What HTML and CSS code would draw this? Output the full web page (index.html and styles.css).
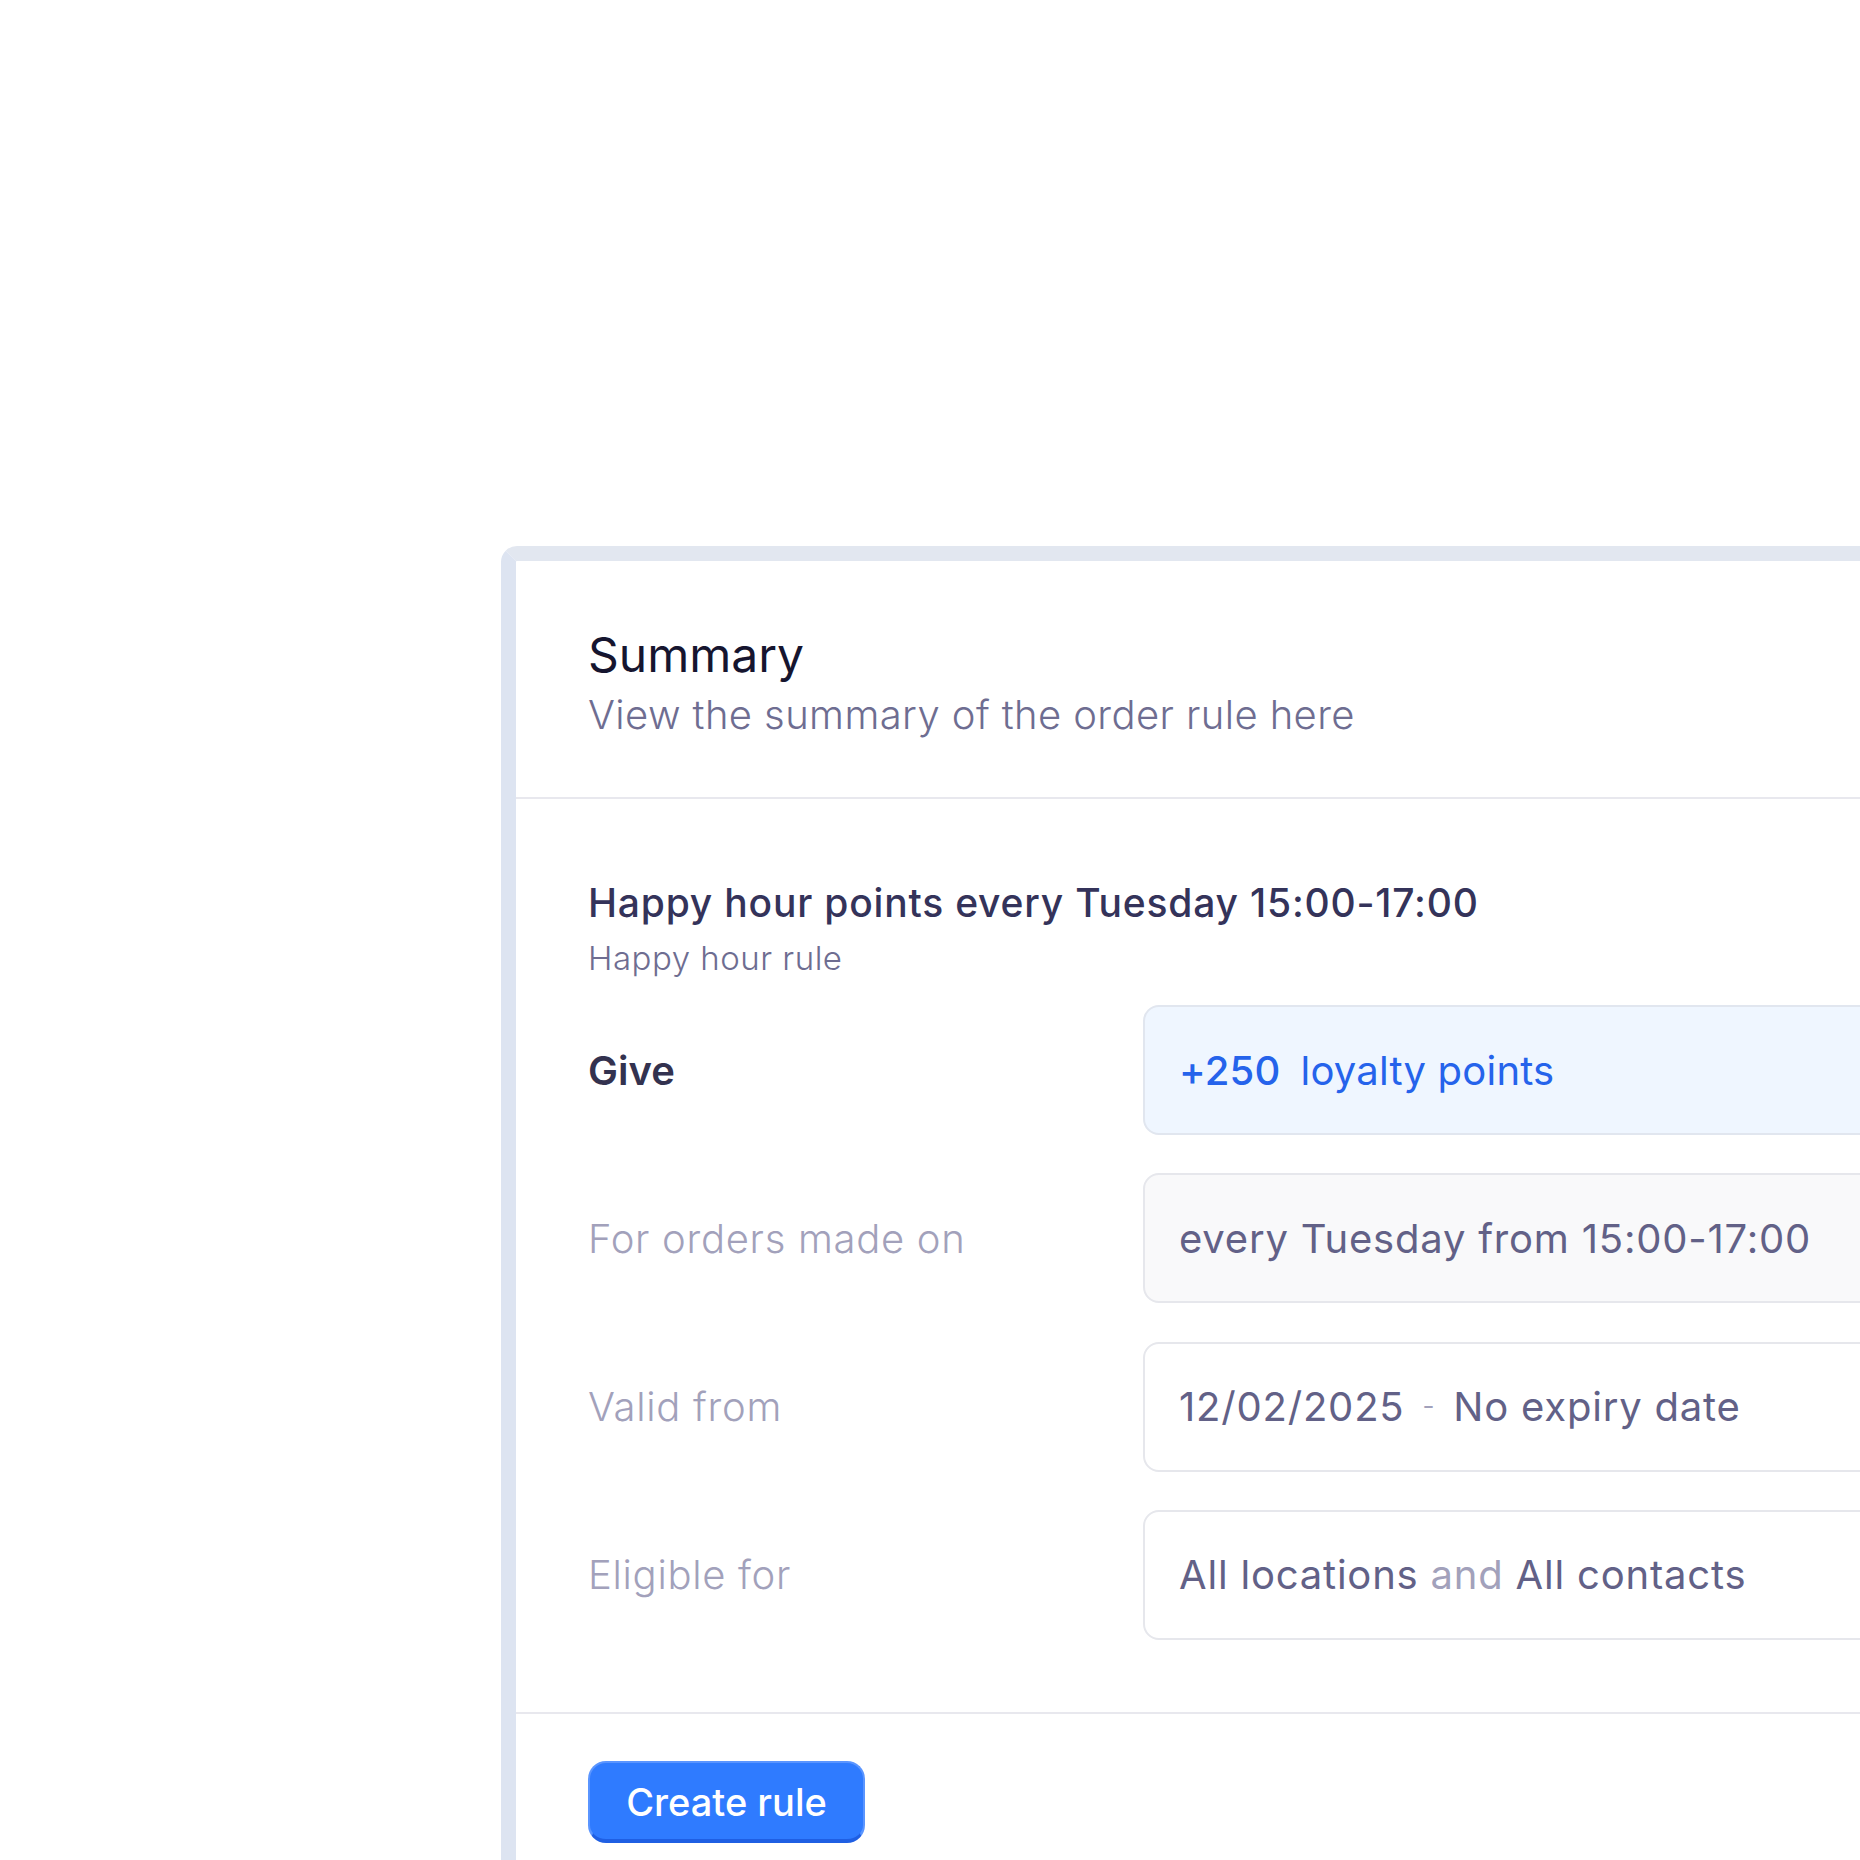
FILE: index.html
```html
<!DOCTYPE html>
<html lang="en">
<head>
  <meta charset="utf-8">
  <meta name="viewport" content="width=device-width, initial-scale=1">
  <title>Order rule - Summary</title>
  <link rel="stylesheet" href="styles.css">
</head>
<body>
  <div class="summary-card">
    <div class="card-head">
      <h1 class="card-title">Summary</h1>
      <p class="card-subtitle">View the summary of the order rule here</p>
    </div>

    <div class="card-body">
      <h2 class="rule-title">Happy hour points every Tuesday 15:00-17:00</h2>
      <p class="rule-type">Happy hour rule</p>

      <div class="rule-rows">
        <div class="rule-label strong">Give</div>
        <div class="rule-value highlight">
          <span class="points">+250</span>
          <span>loyalty points</span>
        </div>

        <div class="rule-label">For orders made on</div>
        <div class="rule-value muted">
          <span>every Tuesday from 15:00-17:00</span>
        </div>

        <div class="rule-label">Valid from</div>
        <div class="rule-value">
          <span>12/02/2025 <span class="dash">-</span> No expiry date</span>
        </div>

        <div class="rule-label">Eligible for</div>
        <div class="rule-value">
          <span>All locations <span class="soft">and</span> All contacts</span>
        </div>
      </div>
    </div>

    <div class="card-foot">
      <button class="create-button">Create rule</button>
    </div>
  </div>
</body>
</html>
```

FILE: styles.css
```css
* {
  margin: 0;
  padding: 0;
  box-sizing: border-box;
}

html, body {
  overflow: hidden;
}

body {
  font-family: 'Inter', 'Liberation Sans', sans-serif;
  background: #ffffff;
  min-height: 100vh;
  color: #2f2e4f;
}

.summary-card {
  margin: 546px 0 0 501px;
  width: 1500px;
  background: #ffffff;
  border: 15px solid #e2e7f0;
  border-left-color: #dde4f1;
  border-radius: 16px 0 0 0;
}

.card-head {
  padding: 65px 72px 58px;
}

.card-title {
  font-size: 48px;
  line-height: 58px;
  font-weight: 400;
  color: #16152f;
}

.card-subtitle {
  margin-top: 7px;
  font-size: 40px;
  line-height: 48px;
  font-weight: 300;
  letter-spacing: 0.4px;
  color: #6e6d91;
}

.card-body {
  border-top: 2px solid #e8e8ee;
  padding: 81px 72px 72px;
}

.rule-title {
  font-size: 39px;
  line-height: 46px;
  font-weight: 500;
  letter-spacing: 0.8px;
  color: #34335a;
}

.rule-type {
  margin-top: 13px;
  font-size: 33px;
  line-height: 39px;
  font-weight: 300;
  letter-spacing: 0.5px;
  color: #6e6d91;
}

.rule-rows {
  margin-top: 27px;
  display: grid;
  grid-template-columns: 555px 1fr;
  grid-auto-rows: 130px;
  row-gap: 38.3px;
  align-items: center;
}

.rule-label {
  font-size: 40px;
  font-weight: 300;
  letter-spacing: 0.7px;
  color: #a2a1bb;
}

.rule-label.strong {
  font-weight: 600;
  letter-spacing: 0;
  color: #33324f;
}

.rule-value {
  height: 100%;
  display: flex;
  align-items: center;
  gap: 20px;
  padding: 0 34px;
  border: 2px solid #e6e7ec;
  border-radius: 16px;
  background: #ffffff;
  font-size: 40px;
  letter-spacing: 0.8px;
  color: #626187;
  white-space: nowrap;
}

.rule-value.highlight {
  background: #eff6ff;
  border-color: #e1e6ef;
  color: #2563eb;
  letter-spacing: 0.2px;
}

.rule-value.highlight .points {
  font-weight: 500;
}

.rule-value.muted {
  background: #f9f9fa;
}

.dash {
  display: inline-block;
  margin: 0 6px;
  font-size: 26px;
  color: #a2a1bb;
  vertical-align: 6px;
}

.soft {
  color: #a2a1bb;
}

.card-foot {
  border-top: 2px solid #e8e8ee;
  padding: 47px 72px 60px;
}

.create-button {
  width: 277px;
  height: 82px;
  padding-top: 3px;
  font-family: inherit;
  font-size: 38px;
  font-weight: 500;
  color: #ffffff;
  background: #2f7bff;
  border: 2px solid #5a95ff;
  border-bottom: 4px solid #1f5fe3;
  border-radius: 18px;
  cursor: pointer;
}
```
